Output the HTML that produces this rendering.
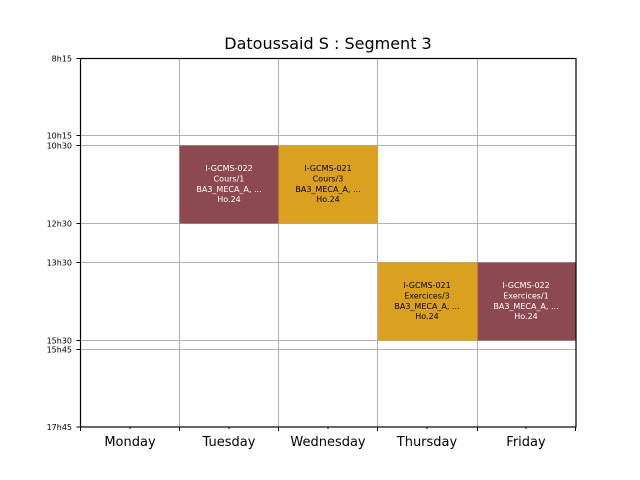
<!DOCTYPE html>
<html><head><meta charset="utf-8"><style>
html,body{margin:0;padding:0;background:#fff;width:640px;height:480px;overflow:hidden}
text{font-family:"DejaVu Sans","Liberation Sans",sans-serif}
</style></head><body>
<svg width="640" height="480" viewBox="0 0 640 480" xmlns="http://www.w3.org/2000/svg">
<rect width="640" height="480" fill="#fff"/>
<text x="328" y="49" font-size="16" text-anchor="middle" fill="#000">Datoussaid S : Segment 3</text>
<g stroke="#b0b0b0" stroke-width="1">
<line x1="80" y1="135.5" x2="576" y2="135.5"/>
<line x1="80" y1="145.5" x2="576" y2="145.5"/>
<line x1="80" y1="223.5" x2="576" y2="223.5"/>
<line x1="80" y1="262.5" x2="576" y2="262.5"/>
<line x1="80" y1="340.5" x2="576" y2="340.5"/>
<line x1="80" y1="349.5" x2="576" y2="349.5"/>
<line x1="179.5" y1="58" x2="179.5" y2="427"/>
<line x1="278.5" y1="58" x2="278.5" y2="427"/>
<line x1="377.5" y1="58" x2="377.5" y2="427"/>
<line x1="477.5" y1="58" x2="477.5" y2="427"/>
</g>
<rect x="179.5" y="145.5" width="99" height="78" fill="#8c4a50"/>
<rect x="278.5" y="145.5" width="99.5" height="78" fill="#daa020"/>
<rect x="378" y="262.5" width="99.5" height="78" fill="#daa020"/>
<rect x="477.5" y="262.5" width="98.5" height="78" fill="#8c4a50"/>
<g font-size="8" text-anchor="middle">
<g fill="#fff"><text x="229" y="171">I-GCMS-022</text><text x="229" y="181.5">Cours/1</text><text x="229" y="192">BA3_MECA_A, ...</text><text x="229" y="202">Ho.24</text></g>
<g fill="#000"><text x="328" y="171">I-GCMS-021</text><text x="328" y="181.5">Cours/3</text><text x="328" y="192">BA3_MECA_A, ...</text><text x="328" y="202">Ho.24</text></g>
<g fill="#000"><text x="427" y="288">I-GCMS-021</text><text x="427" y="298.5">Exercices/3</text><text x="427" y="309">BA3_MECA_A, ...</text><text x="427" y="319">Ho.24</text></g>
<g fill="#fff"><text x="526" y="288">I-GCMS-022</text><text x="526" y="298.5">Exercices/1</text><text x="526" y="309">BA3_MECA_A, ...</text><text x="526" y="319">Ho.24</text></g>
</g>
<rect x="80.5" y="58.5" width="495.5" height="368.5" fill="none" stroke="#000" stroke-width="1.2"/>
<g stroke="#000" stroke-width="1">
<line x1="76.5" y1="58.5" x2="80" y2="58.5"/>
<line x1="76.5" y1="135.5" x2="80" y2="135.5"/>
<line x1="76.5" y1="145.5" x2="80" y2="145.5"/>
<line x1="76.5" y1="223.5" x2="80" y2="223.5"/>
<line x1="76.5" y1="262.5" x2="80" y2="262.5"/>
<line x1="76.5" y1="340.5" x2="80" y2="340.5"/>
<line x1="76.5" y1="349.5" x2="80" y2="349.5"/>
<line x1="76.5" y1="427" x2="80" y2="427"/>
<line x1="80.5" y1="427" x2="80.5" y2="431"/>
<line x1="179.5" y1="427" x2="179.5" y2="431"/>
<line x1="278.5" y1="427" x2="278.5" y2="431"/>
<line x1="377.5" y1="427" x2="377.5" y2="431"/>
<line x1="477.5" y1="427" x2="477.5" y2="431"/>
<line x1="575.5" y1="427" x2="575.5" y2="431"/>
<line x1="130" y1="427" x2="130" y2="429"/>
<line x1="229" y1="427" x2="229" y2="429"/>
<line x1="328" y1="427" x2="328" y2="429"/>
<line x1="427" y1="427" x2="427" y2="429"/>
<line x1="526" y1="427" x2="526" y2="429"/>
</g>
<g font-size="8" text-anchor="end" fill="#000">
<text x="72" y="61.5">8h15</text>
<text x="72" y="138.5">10h15</text>
<text x="72" y="148.5">10h30</text>
<text x="72" y="226.5">12h30</text>
<text x="72" y="265.5">13h30</text>
<text x="72" y="343.5">15h30</text>
<text x="72" y="352.5">15h45</text>
<text x="72" y="430">17h45</text>
</g>
<g font-size="13" text-anchor="middle" fill="#000">
<text x="130" y="446">Monday</text>
<text x="229" y="446">Tuesday</text>
<text x="328" y="446">Wednesday</text>
<text x="427" y="446">Thursday</text>
<text x="526" y="446">Friday</text>
</g>
</svg>
</body></html>
